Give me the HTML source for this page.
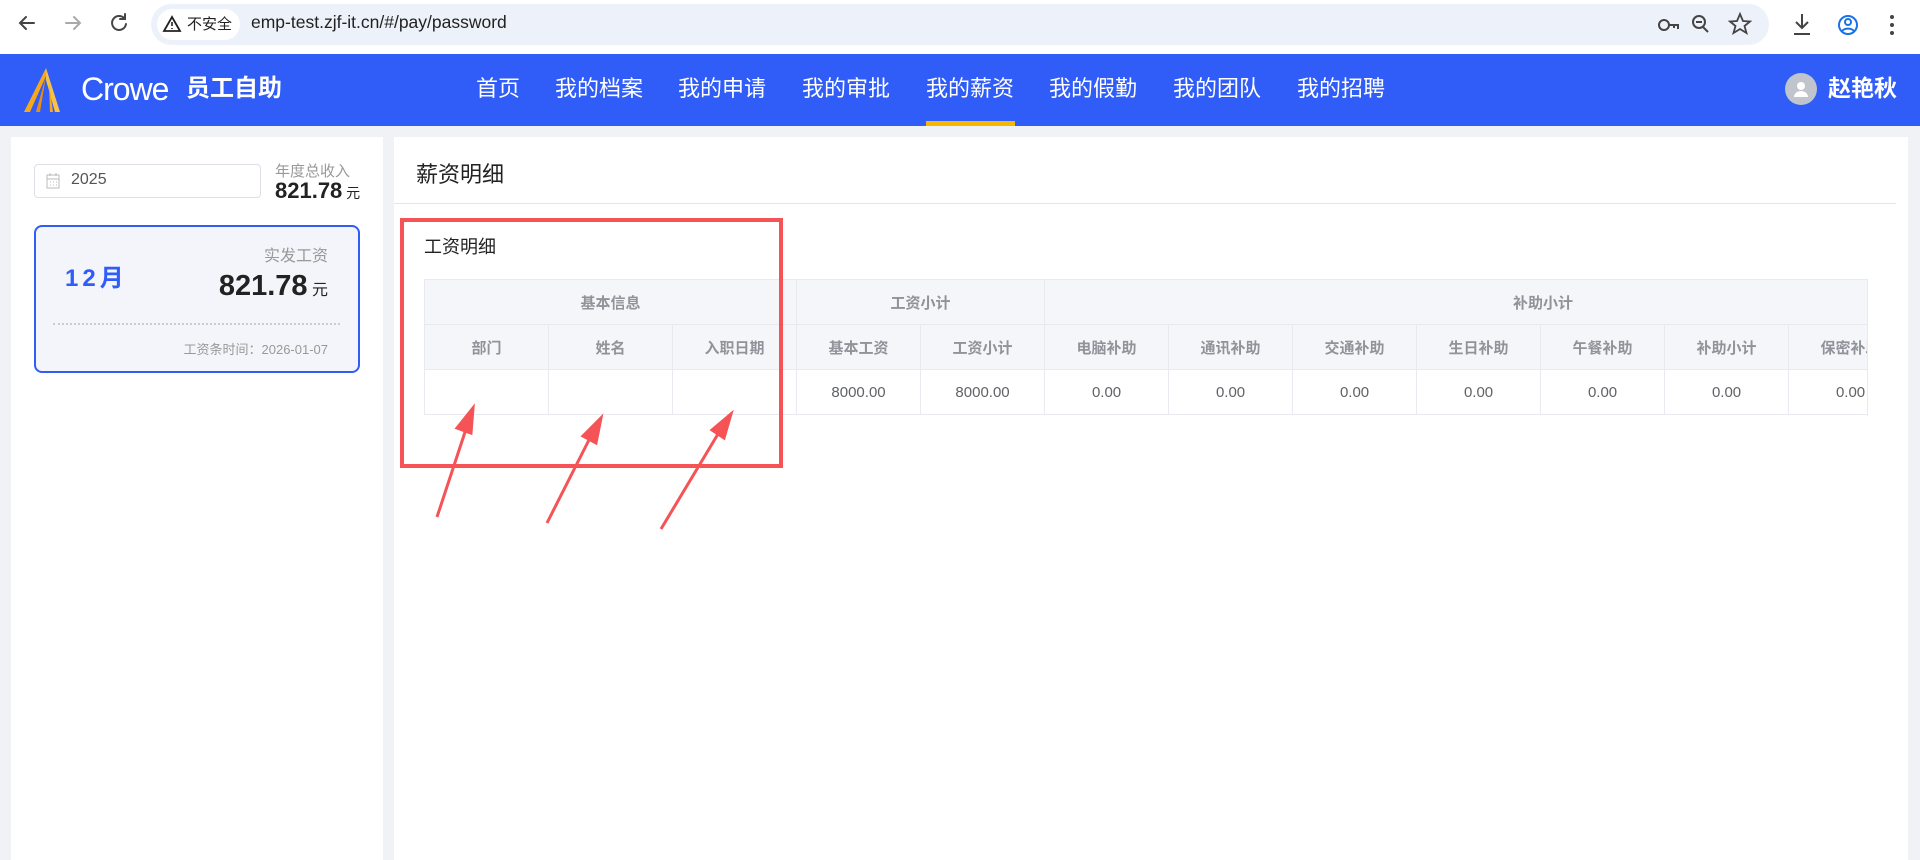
<!DOCTYPE html>
<html><head><meta charset="utf-8"><style>
*{margin:0;padding:0;box-sizing:border-box}
body{width:1920px;height:860px;overflow:hidden;background:#f0f2f5;font-family:"Liberation Sans","Noto Sans CJK SC",sans-serif;position:relative}
.abs{position:absolute}
.chrome{left:0;top:0;width:1920px;height:54px;background:#fff}
.pill{left:151px;top:4px;width:1618px;height:41px;border-radius:21px;background:#edf1f9}
.nav{left:0;top:54px;width:1920px;height:72px;background:#305cf8}
.nav .it{position:absolute;top:20px;color:#fff;font-size:22px;line-height:30px;white-space:nowrap}
.panel{background:#fff}
table{border-collapse:collapse;table-layout:fixed;width:1612px}
td{border:1px solid #e8eaf0;height:45px;text-align:center;font-size:15px;color:#606266;overflow:hidden;white-space:nowrap}
tr.h td{background:#f5f6fa;color:#909399;font-weight:bold}
</style></head><body>
<div class="abs chrome"></div>
<svg class="abs" style="left:0;top:0" width="160" height="50">
<g stroke="#444" stroke-width="2" fill="none" stroke-linecap="round">
<path d="M34 23H20M26 17l-6 6 6 6"/>
<path d="M66 23h14M74 17l6 6-6 6" stroke="#aaa"/>
<path d="M124 18a7 7 0 1 0 2 6M125 14v5h-5"/>
</g></svg>
<div class="abs pill"></div>
<div class="abs" style="left:157px;top:9px;width:83px;height:31px;background:#fff;border-radius:16px;font-size:15px;line-height:31px;padding-left:30px;color:#222">不安全</div>
<svg class="abs" style="left:162px;top:15px" width="20" height="18"><path d="M10 2L18 16H2Z" fill="none" stroke="#222" stroke-width="1.8"/><path d="M10 7v4M10 13v1" stroke="#222" stroke-width="1.6"/></svg>
<div class="abs" style="left:251px;top:12px;font-size:17.5px;color:#222">emp-test.zjf-it.cn/#/pay/password</div>
<svg class="abs" style="left:1640px;top:8px" width="280" height="34"><g stroke="#444" stroke-width="2" fill="none">
<circle cx="24" cy="17" r="5"/><path d="M29 17h9v4M34 17v3"/>
<circle cx="59" cy="14" r="6"/><path d="M63 19l5 5M56 14h6"/>
<path d="M100 6l3 7 7 .5-5.5 4.5 2 7-6.5-4-6.5 4 2-7L90 13.5l7-.5z" stroke-width="1.8"/>
<path d="M162 6v14M156 14l6 6 6-6M154 26h16"/>
<circle cx="208" cy="17" r="9" stroke="#1a73e8"/><circle cx="208" cy="14" r="3" stroke="#1a73e8"/><path d="M202 23a7 5 0 0 1 12 0" stroke="#1a73e8"/>
</g><g fill="#444"><circle cx="252" cy="9" r="2"/><circle cx="252" cy="17" r="2"/><circle cx="252" cy="25" r="2"/></g></svg>
<div class="abs nav">
<svg class="abs" style="left:22px;top:14px" width="50" height="44"><path d="M24 0L2 44h6L24 8z" fill="#f5a81c"/><path d="M24 0l14 44h-5L24 12z" fill="#f8c24a"/><path d="M24 8L14 44h4z" fill="#e88d10"/><path d="M27 14l4 30h-3z" fill="#f5a81c"/></svg>
<div class="it" style="left:81px;top:17px;font-size:32px;line-height:36px;letter-spacing:-1px">Crowe</div>
<div class="it" style="left:186px;top:18px;font-size:24px;font-weight:bold;line-height:34px">员工自助</div>
<div class="it" style="left:476px">首页</div>
<div class="it" style="left:555px">我的档案</div>
<div class="it" style="left:678px">我的申请</div>
<div class="it" style="left:802px">我的审批</div>
<div class="it" style="left:926px">我的薪资</div>
<div class="it" style="left:1049px">我的假勤</div>
<div class="it" style="left:1173px">我的团队</div>
<div class="it" style="left:1297px">我的招聘</div>
<div class="abs" style="left:926px;top:67px;width:89px;height:5px;background:#f5b800"></div>
<div class="abs" style="left:1785px;top:19px;width:32px;height:32px;border-radius:50%;background:#c0c4cc"></div>
<svg class="abs" style="left:1785px;top:19px" width="32" height="32"><circle cx="16" cy="13" r="4" fill="#fff"/><path d="M9 24a7 6 0 0 1 14 0z" fill="#fff"/></svg>
<div class="it" style="left:1828px;top:19px;font-weight:bold;font-size:23px">赵艳秋</div>
</div>
<div class="abs panel" style="left:11px;top:137px;width:372px;height:723px"></div>
<div class="abs" style="left:34px;top:164px;width:227px;height:34px;border:1px solid #dcdfe6;border-radius:4px;background:#fff"></div>
<svg class="abs" style="left:46px;top:173px" width="14" height="16"><rect x="1" y="2" width="12" height="13" fill="none" stroke="#bbb"/><path d="M1 6h12M4 0v3M10 0v3" stroke="#bbb"/><path d="M4 9h1M7 9h1M10 9h1M4 12h1M7 12h1M10 12h1" stroke="#bbb"/></svg>
<div class="abs" style="left:71px;top:171px;font-size:16px;color:#555">2025</div>
<div class="abs" style="left:275px;top:160px;font-size:15px;color:#999">年度总收入</div>
<div class="abs" style="left:275px;top:178px;font-size:22px;font-weight:bold;color:#222">821.78<span style="font-size:14px;font-weight:normal"> 元</span></div>
<div class="abs" style="left:34px;top:225px;width:326px;height:148px;border:2px solid #305cf8;border-radius:8px;background:#f4f5fa"></div>
<div class="abs" style="left:65px;top:258px;font-size:24px;font-weight:bold;color:#305cf8;letter-spacing:4px">12月</div>
<div class="abs" style="right:1592px;top:242px;font-size:16px;color:#999">实发工资</div>
<div class="abs" style="right:1592px;top:270px;font-size:29px;font-weight:bold;color:#222">821.78<span style="font-size:16px;font-weight:normal"> 元</span></div>
<div class="abs" style="left:53px;top:323px;width:287px;border-top:2px dotted #ccc"></div>
<div class="abs" style="right:1592px;top:339px;font-size:13px;color:#999">工资条时间：2026-01-07</div>
<div class="abs panel" style="left:394px;top:137px;width:1514px;height:723px"></div>
<div class="abs" style="left:416px;top:157px;font-size:22px;color:#222">薪资明细</div>
<div class="abs" style="left:394px;top:203px;width:1502px;height:1px;background:#e4e6eb"></div>
<div class="abs" style="left:424px;top:233px;font-size:18px;color:#222">工资明细</div>
<div class="abs" style="left:424px;top:279px;width:1444px;height:137px;overflow:hidden;border-right:1px solid #e8eaf0">
<table>
<colgroup><col style="width:124px"><col style="width:124px"><col style="width:124px"><col style="width:124px"><col style="width:124px"><col style="width:124px"><col style="width:124px"><col style="width:124px"><col style="width:124px"><col style="width:124px"><col style="width:124px"><col style="width:124px"><col style="width:124px"></colgroup>
<tr class="h"><td colspan="3">基本信息</td><td colspan="2">工资小计</td><td colspan="8" style="text-align:left;padding-left:468px">补助小计</td></tr>
<tr class="h"><td>部门</td><td>姓名</td><td>入职日期</td><td>基本工资</td><td>工资小计</td><td>电脑补助</td><td>通讯补助</td><td>交通补助</td><td>生日补助</td><td>午餐补助</td><td>补助小计</td><td>保密补助</td><td>其他</td></tr>
<tr><td></td><td></td><td></td><td>8000.00</td><td>8000.00</td><td>0.00</td><td>0.00</td><td>0.00</td><td>0.00</td><td>0.00</td><td>0.00</td><td>0.00</td><td>0.00</td></tr>
</table></div>
<div class="abs" style="left:400px;top:218px;width:383px;height:250px;border:4px solid #f55356"></div>
<svg class="abs" style="left:0;top:0" width="900" height="600"><g fill="#f55356" stroke="#f55356" stroke-width="3">
<path d="M437 517L469 420"/><path d="M473 408l-2 25-14-5z"/>
<path d="M547 523L595 428"/><path d="M601 418l-5 25-13-7z"/>
<path d="M661 529L724 424"/><path d="M731 414l-7 24-12-8z"/>
</g></svg>
</body></html>
